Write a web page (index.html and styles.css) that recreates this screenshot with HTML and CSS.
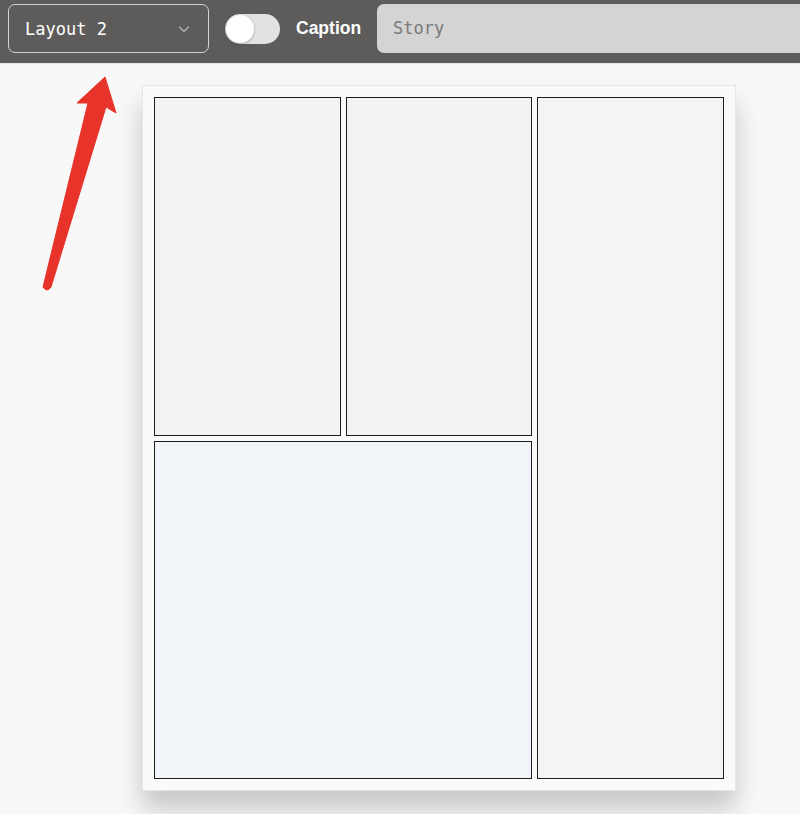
FILE: index.html
```html
<!DOCTYPE html>
<html lang="en">
<head>
    <meta charset="UTF-8">
    <meta name="viewport" content="width=device-width, initial-scale=1.0">
    <title>Comic Layout</title>
    <link rel="stylesheet" href="styles.css">
</head>
<body>

    <div class="toolbar">
        <div class="layout-select">
            <span>Layout 2</span>
            <svg class="chevron" width="12" height="8" viewBox="0 0 12 8">
                <path d="M1 1.5 L6 6.5 L11 1.5" fill="none" stroke="#b5b3b1" stroke-width="1.3"/>
            </svg>
        </div>
        <div class="toggle"><div class="knob"></div></div>
        <div class="caption-label">Caption</div>
        <div class="story-input">Story</div>
    </div>

    <div class="workspace">
        <div class="paper">
            <div class="panel"></div>
            <div class="panel"></div>
            <div class="panel tall"></div>
            <div class="panel wide"></div>
        </div>
    </div>

    <svg class="pointer" width="130" height="300" viewBox="0 0 130 300">
        <path d="M105 77 L116 113 L106 107 L51 287 Q47 293 43 287 L88 103 L77 103 Z" fill="#e8332a" stroke="#e8332a" stroke-width="1" stroke-linejoin="round"/>
    </svg>

</body>
</html>
```

FILE: styles.css
```css
html {
    height: 100%;
    overflow: hidden;
    background-color: #f8f8f8;
}
body {
    margin: 0;
    min-height: 100%;
    background-color: #f8f8f8;
    font-family: "Liberation Sans", Arial, sans-serif;
}
.toolbar {
    display: flex;
    align-items: flex-start;
    gap: 16px;
    height: 64px;
    box-sizing: border-box;
    padding: 4px 0 0 8px;
    background-color: #5e5c5a;
    border-bottom: 1px solid #e4e4e4;
    overflow: hidden;
}
.layout-select {
    display: flex;
    align-items: center;
    justify-content: space-between;
    width: 201px;
    height: 49px;
    box-sizing: border-box;
    padding: 0 18px 0 16px;
    border: 1px solid #d6d4d2;
    border-radius: 7px;
    color: #fff;
    font-family: "DejaVu Sans Mono", "Liberation Mono", monospace;
    font-size: 17px;
}
.toggle {
    width: 55px;
    height: 30px;
    margin-top: 10px;
    border-radius: 15px;
    background-color: #e2e2e2;
    position: relative;
}
.knob {
    position: absolute;
    left: 1px;
    top: 1px;
    width: 28px;
    height: 28px;
    border-radius: 50%;
    background-color: #fff;
    box-shadow: 0 1px 3px rgba(0, 0, 0, 0.25);
}
.caption-label {
    width: 65px;
    line-height: 49px;
    color: #fff;
    font-weight: bold;
    font-size: 17.5px;
    white-space: nowrap;
}
.story-input {
    flex: 1;
    height: 49px;
    line-height: 49px;
    margin-right: -20px;
    padding-left: 16px;
    border-radius: 7px;
    background-color: #d4d4d4;
    color: #7a7a7a;
    font-family: "DejaVu Sans Mono", "Liberation Mono", monospace;
    font-size: 17px;
}
.workspace {
    padding: 21px 0 0 142px;
}
.paper {
    width: 594px;
    height: 706px;
    box-sizing: border-box;
    padding: 11px;
    background-color: #fafafa;
    border: 1px solid #e6e6e6;
    box-shadow: 0 18px 24px rgba(0, 0, 0, 0.2);
    display: grid;
    grid-template-columns: 1fr 1fr 1fr;
    grid-template-rows: 1fr 1fr;
    gap: 5px;
}
.panel {
    border: 1px solid #1e1e1e;
    background-color: #f3f3f3;
}
.panel.tall {
    grid-column: 3;
    grid-row: 1 / 3;
    background-color: #f4f4f2;
}
.panel.wide {
    grid-column: 1 / 3;
    grid-row: 2;
    background-color: #f1f4f9;
}
.pointer {
    position: absolute;
    left: 0;
    top: 0;
}
```
